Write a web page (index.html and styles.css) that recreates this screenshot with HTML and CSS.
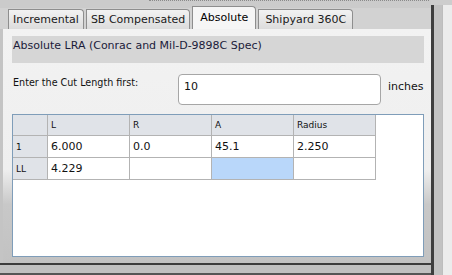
FILE: index.html
```html
<!DOCTYPE html>
<html lang="en">
  <head>
    <meta charset="UTF-8" />
    <meta name="viewport" content="width=device-width, initial-scale=1.0" />
    <title>Absolute LRA</title>
    <link rel="stylesheet" href="styles.css">
  </head>

  <body>
    <div class="window">
      <div class="main">
        <div class="topbar"><div class="grip"></div></div>

        <div class="tabs">
          <div class="tab">Incremental</div>
          <div class="tab">SB Compensated</div>
          <div class="tab active">Absolute</div>
          <div class="tab">Shipyard 360C</div>
        </div>

        <div class="panel">
          <div class="title">Absolute LRA (Conrac and Mil-D-9898C Spec)</div>

          <div class="cut-row">
            <div class="cut-label">Enter the Cut Length first:</div>
            <div class="cut-input">10</div>
            <div class="cut-unit">inches</div>
          </div>

          <div class="grid-wrap">
            <table class="grid">
              <tr>
                <th class="rowhead"></th>
                <th>L</th>
                <th>R</th>
                <th>A</th>
                <th>Radius</th>
              </tr>
              <tr>
                <th class="rowhead">1</th>
                <td>6.000</td>
                <td>0.0</td>
                <td>45.1</td>
                <td>2.250</td>
              </tr>
              <tr>
                <th class="rowhead">LL</th>
                <td>4.229</td>
                <td></td>
                <td class="selected"></td>
                <td></td>
              </tr>
            </table>
          </div>
        </div>

        <div class="bottom-edge"></div>
      </div>
      <div class="side-edge"></div>
    </div>
  </body>
</html>
```

FILE: styles.css
```css
body {
  margin: 0;
  width: 452px;
  height: 275px;
  overflow: hidden;
  background-color: #cdcdcd;
  font: normal 11px "DejaVu Sans", sans-serif;
  color: #111;
}

.window {
  display: flex;
  height: 275px;
}

.main {
  width: 431px;
  display: flex;
  flex-direction: column;
}

.topbar {
  height: 8px;
  background-color: #cbcbcb;
  display: flex;
  justify-content: flex-end;
}

.grip {
  width: 280px;
  border-top: 1px dotted #8a8a8a;
  margin-right: 2px;
}

/* tab strip */
.tabs {
  height: 21px;
  display: flex;
  align-items: flex-end;
  gap: 2px;
  padding-left: 8px;
  background-color: #d2d2d2;
}

.tab {
  height: 20px;
  line-height: 20px;
  padding: 0 4px;
  box-sizing: border-box;
  border: 1px solid #8e8e8e;
  border-bottom: none;
  border-top-right-radius: 4px;
  background: linear-gradient(#f2f2f2, #dcdcdc);
  color: #1a1a1a;
}

.tab.active {
  height: 24px;
  line-height: 21px;
  padding: 0 7px;
  margin-bottom: -1px;
  background: #f6f6f6;
  color: #000;
}

.tab:last-child {
  padding: 0 6px;
}

/* content */
.panel {
  height: 234px;
  box-sizing: border-box;
  padding: 7px 7px 6px 9px;
  border-left: 3px solid #c4c4c4;
  background: linear-gradient(#f2f2f2 0%, #efefef 60%, #c8c8c8 75%, #c2c2c2 100%);
}

.title {
  height: 27px;
  box-sizing: border-box;
  padding: 3px 1px 0;
  background-color: #d6d6d6;
  color: #1b1b3a;
}

.cut-row {
  display: flex;
  margin-top: 11px;
  height: 31px;
}

.cut-label {
  width: 165px;
  padding: 3px 0 0 1px;
  font-size: 9.6px;
}

.cut-input {
  width: 203px;
  height: 31px;
  box-sizing: border-box;
  padding: 5px 5px;
  border: 1px solid #a6a6a6;
  border-radius: 4px;
  background-color: #fff;
  font-size: 11px;
}

.cut-unit {
  margin-left: 7px;
  padding-top: 6px;
}

.grid-wrap {
  margin-top: 9px;
  height: 143px;
  box-sizing: border-box;
  border: 1px solid #7f9db9;
  background-color: #fff;
}

.grid {
  border-collapse: separate;
  border-spacing: 0;
  table-layout: fixed;
}

.grid th,
.grid td {
  width: 78px;
  height: 21px;
  padding: 0 0 0 3px;
  border-right: 1px solid #b3b3b3;
  border-bottom: 1px solid #b3b3b3;
  text-align: left;
  font-weight: normal;
  white-space: nowrap;
}

.grid th {
  height: 20px;
  background-color: #e0e3e8;
  font-size: 9px;
}

.grid th.rowhead {
  width: 31px;
}

.grid td.selected {
  background-color: #b9d7fa;
}

/* frame edges */
.bottom-edge {
  height: 12px;
  box-sizing: border-box;
  border-top: 2px solid #3c3c3c;
  border-bottom: 2px solid #555;
  background-color: #c0c0c0;
}

.side-edge {
  width: 21px;
  margin-top: 5px;
  box-sizing: border-box;
  border-left: 3px solid #3e3e3e;
  background: linear-gradient(90deg, #c2c2c2 0 8px, #bdbdbd 8px 9px, #ececec 9px);
}
```
